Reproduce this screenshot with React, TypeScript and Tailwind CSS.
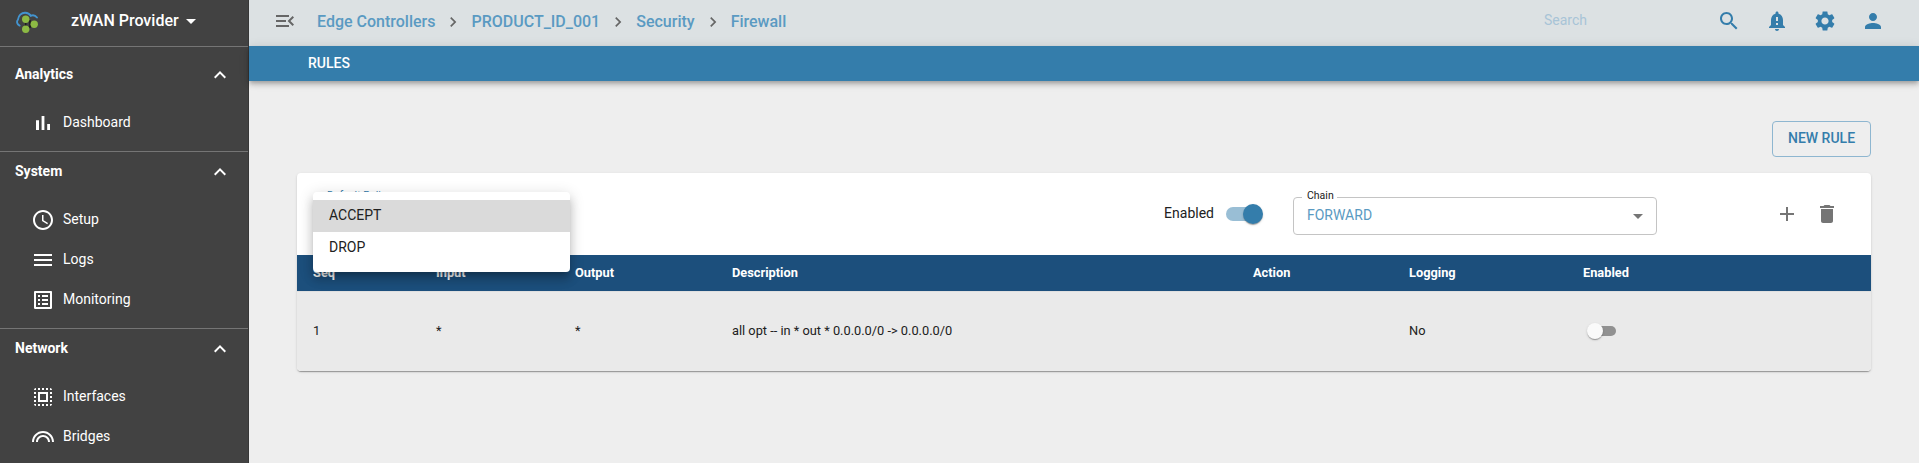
import React from "react";

type IconProps = { d: string; className?: string };

const Icon = ({ d, className = "size-6" }: IconProps) => (
  <svg viewBox="0 0 24 24" fill="currentColor" className={`shrink-0 ${className}`}>
    <path d={d} />
  </svg>
);

const P = {
  bars: "M5 9.2h3V19H5zM10.6 5h2.8v14h-2.8zm5.6 8H19v6h-2.8z",
  clock:
    "M11.99 2C6.47 2 2 6.48 2 12s4.47 10 9.99 10C17.52 22 22 17.52 22 12S17.52 2 11.99 2zM12 20c-4.42 0-8-3.58-8-8s3.58-8 8-8 8 3.58 8 8-3.58 8-8 8zm.5-13H11v6l5.25 3.15.75-1.23-4.5-2.67z",
  menu: "M3 18h18v-2H3v2zm0-5h18v-2H3v2zm0-7v2h18V6H3z",
  list: "M19 5v14H5V5h14m1.1-2H3.9c-.5 0-.9.4-.9.9v16.2c0 .4.4.9.9.9h16.2c.4 0 .9-.5.9-.9V3.9c0-.5-.5-.9-.9-.9zM11 7h6v2h-6V7zm0 4h6v2h-6v-2zm0 4h6v2h-6zM7 7h2v2H7zm0 4h2v2H7zm0 4h2v2H7z",
  select:
    "M3 5h2V3c-1.1 0-2 .9-2 2zm0 8h2v-2H3v2zm4 8h2v-2H7v2zM3 9h2V7H3v2zm10-6h-2v2h2V3zm6 0v2h2c0-1.1-.9-2-2-2zM5 21v-2H3c0 1.1.9 2 2 2zm-2-4h2v-2H3v2zM9 3H7v2h2V3zm2 18h2v-2h-2v2zm8-8h2v-2h-2v2zm0 8c1.1 0 2-.9 2-2h-2v2zm0-12h2V7h-2v2zm0 8h2v-2h-2v2zm-4 4h2v-2h-2v2zm0-16h2V3h-2v2zM7 17h10V7H7v10zm2-8h6v6H9V9z",
  arcs: "M12 10c-3.86 0-7 3.14-7 7h2c0-2.76 2.24-5 5-5s5 2.24 5 5h2c0-3.86-3.14-7-7-7zm0-4C5.93 6 1 10.93 1 17h2c0-4.96 4.04-9 9-9s9 4.04 9 9h2c0-6.07-4.93-11-11-11z",
  up: "M12 8l-6 6 1.41 1.41L12 10.83l4.59 4.58L18 14z",
  next: "M10 6L8.59 7.41 13.17 12l-4.58 4.59L10 18l6-6z",
  drop: "M7 10l5 5 5-5z",
  menuOpen:
    "M3 18h13v-2H3v2zm0-5h10v-2H3v2zm0-7v2h13V6H3zm18 9.59L17.42 12 21 8.41 19.59 7l-5 5 5 5L21 15.59z",
  search:
    "M15.5 14h-.79l-.28-.27C15.41 12.59 16 11.11 16 9.5 16 5.91 13.09 3 9.5 3S3 5.91 3 9.5 5.91 16 9.5 16c1.61 0 3.09-.59 4.23-1.57l.27.28v.79l5 4.99L20.49 19l-4.99-5zm-6 0C7.01 14 5 11.99 5 9.5S7.01 5 9.5 5 14 7.01 14 9.5 11.99 14 9.5 14z",
  bell: "M18 16v-5c0-3.07-1.64-5.64-4.5-6.32V4c0-.83-.67-1.5-1.5-1.5s-1.5.67-1.5 1.5v.68C7.63 5.36 6 7.92 6 11v5l-2 2v1h16v-1l-2-2zm-5 0h-2v-2h2v2zm0-4h-2V8h2v4zm-1 10c1.1 0 2-.9 2-2h-4c0 1.1.89 2 2 2z",
  gear: "M19.14 12.94c.04-.3.06-.61.06-.94 0-.32-.02-.64-.07-.94l2.03-1.58c.18-.14.23-.41.12-.61l-1.92-3.32c-.12-.22-.37-.29-.59-.22l-2.39.96c-.5-.38-1.03-.7-1.62-.94l-.36-2.54c-.04-.24-.24-.41-.48-.41h-3.84c-.24 0-.43.17-.47.41l-.36 2.54c-.59.24-1.13.57-1.62.94l-2.39-.96c-.22-.08-.47 0-.59.22L2.74 8.87c-.12.21-.08.47.12.61l2.03 1.58c-.05.3-.09.63-.09.94s.02.64.07.94l-2.03 1.58c-.18.14-.23.41-.12.61l1.92 3.32c.12.22.37.29.59.22l2.39-.96c.5.38 1.03.7 1.62.94l.36 2.54c.05.24.24.41.48.41h3.84c.24 0 .44-.17.47-.41l.36-2.54c.59-.24 1.13-.56 1.62-.94l2.39.96c.22.08.47 0 .59-.22l1.92-3.32c.12-.22.07-.47-.12-.61l-2.01-1.58zM12 15.6c-1.98 0-3.6-1.62-3.6-3.6s1.62-3.6 3.6-3.6 3.6 1.62 3.6 3.6-1.62 3.6-3.6 3.6z",
  person:
    "M12 12c2.21 0 4-1.79 4-4s-1.79-4-4-4-4 1.79-4 4 1.79 4 4 4zm0 2c-2.67 0-8 1.34-8 4v2h16v-2c0-2.66-5.33-4-8-4z",
  plus: "M19 13h-6v6h-2v-6H5v-2h6V5h2v6h6v2z",
  trash: "M6 19c0 1.1.9 2 2 2h8c1.1 0 2-.9 2-2V7H6v12zM19 4h-3.5l-1-1h-5l-1 1H5v2h14V4z",
};

const sections = [
  { title: "Analytics", items: [{ label: "Dashboard", d: P.bars }] },
  {
    title: "System",
    items: [
      { label: "Setup", d: P.clock },
      { label: "Logs", d: P.menu },
      { label: "Monitoring", d: P.list },
    ],
  },
  {
    title: "Network",
    items: [
      { label: "Interfaces", d: P.select },
      { label: "Bridges", d: P.arcs },
    ],
  },
];

const Logo = () => (
  <svg viewBox="0 0 24 24" className="size-6 shrink-0">
    <path
      d="M4.600 14.600C1.800 13.200 1.300 10.600 3 8.500 3.300 4.500 6.500 1.800 10 1.700c2.800-.1 4.600 1.200 5.700 3.100 2.300-.9 4.800-.2 6.300 1.700"
      fill="none"
      stroke="#4394cf"
      strokeWidth="1.900"
      strokeLinecap="round"
    />
    <path d="M10.700 8.500v9.500M10.700 8.500l8.500 4.800-8.500 4.700M15 9v8" fill="none" stroke="#1c1c1c" strokeWidth="1.500" />
    <circle cx="10.700" cy="8.300" r="3.700" fill="#8cb944" />
    <circle cx="19.200" cy="13.300" r="3.700" fill="#8cb944" />
    <circle cx="10.700" cy="18.200" r="3.700" fill="#8cb944" />
  </svg>
);

const Sidebar = () => (
  <aside className="flex h-full w-[249px] shrink-0 flex-col overflow-hidden border-r border-[#373737] bg-[#424242] text-white">
    <div className="flex h-[46px] shrink-0 items-center pl-[15px]">
      <Logo />
      <span className="ml-8 pb-[5px] text-[16px] leading-5 font-medium">zWAN Provider</span>
      <Icon d={P.drop} className="mb-1 size-6" />
    </div>
    {sections.map((s, i) => (
      <section
        key={s.title}
        className={`flex shrink-0 flex-col border-t border-[#757575] pb-2 ${i === 0 ? "pt-2" : ""}`}
      >
        <div className="flex h-10 items-center justify-between pr-4 pl-[15px]">
          <span className="pb-0.5 text-[14px] leading-5 font-bold">{s.title}</span>
          <Icon d={P.up} />
        </div>
        <div className="flex flex-col pt-2">
          {s.items.map((it) => (
            <div key={it.label} className="flex h-10 items-center gap-2 pl-[31px]">
              <Icon d={it.d} />
              <span className="pb-0.5 text-[14px] leading-5">{it.label}</span>
            </div>
          ))}
        </div>
      </section>
    ))}
  </aside>
);

const TopBar = () => (
  <header className="flex h-[46px] shrink-0 items-center bg-[#dce1e3] pr-[34px] pl-6">
    <Icon d={P.menuOpen} className="mb-1 size-6 text-[#666]" />
    <nav className="ml-5 flex flex-1 items-center pb-[3px] text-[16px] leading-6 font-medium text-[#5a9ac2]">
      {["Edge Controllers", "PRODUCT_ID_001", "Security", "Firewall"].map((c, i) => (
        <React.Fragment key={c}>
          {i > 0 && <Icon d={P.next} className="mx-2 size-5 text-[#666]" />}
          <span>{c}</span>
        </React.Fragment>
      ))}
    </nav>
    <span className="mr-[130px] pb-1.5 text-[14px] leading-5 text-[#a8c4d7]">Search</span>
    <div className="flex gap-6 pb-1 text-[#347dab]">
      <Icon d={P.search} />
      <Icon d={P.bell} />
      <Icon d={P.gear} />
      <Icon d={P.person} />
    </div>
  </header>
);

const columns = [
  { head: "Seq", cell: "1" },
  { head: "Input", cell: "*" },
  { head: "Output", cell: "*" },
  { head: "Description", cell: "all opt -- in * out * 0.0.0.0/0 -> 0.0.0.0/0" },
  { head: "Action", cell: "" },
  { head: "Logging", cell: "No" },
];

const grid = "grid grid-cols-[123px_139px_157px_521px_156px_174px_1fr] items-center pl-4";

const PolicySelect = () => (
  <div className="relative h-[38px] w-[257px] rounded border border-[#c4c4c4]">
    <span className="absolute -top-[10px] left-2 bg-white px-[5px] text-[10.5px] leading-4 text-[#347dab]">
      Default Policy
    </span>
    <div className="absolute -top-[6px] -left-px z-10 h-20 w-[257px] rounded bg-white py-2 text-[14px] text-[#212121] shadow-[0_5px_5px_-3px_rgba(0,0,0,0.2),0_8px_10px_1px_rgba(0,0,0,0.14),0_3px_14px_2px_rgba(0,0,0,0.12)]">
      <div className="h-8 bg-[#dadada] px-4 leading-[30px]">ACCEPT</div>
      <div className="h-8 px-4 leading-[30px]">DROP</div>
    </div>
  </div>
);

const ChainSelect = () => (
  <div className="relative flex h-[38px] w-[364px] items-center justify-between rounded border border-[#c4c4c4] pr-[6px] pl-[13px]">
    <span className="absolute -top-[10px] left-2 bg-white pr-[3px] pl-[5px] text-[10.5px] leading-4 text-[#212121]">
      Chain
    </span>
    <span className="pb-0.5 text-[14px] leading-5 text-[#5a9ac2]">FORWARD</span>
    <Icon d={P.drop} className="size-6 text-[#757575]" />
  </div>
);

const shadowKnob =
  "shadow-[0_2px_1px_-1px_rgba(0,0,0,0.2),0_1px_1px_0_rgba(0,0,0,0.14),0_1px_3px_0_rgba(0,0,0,0.12)]";

const RulesCard = () => (
  <div className="mt-4 flex flex-col rounded bg-white shadow-[0_2px_1px_-1px_rgba(0,0,0,0.2),0_1px_1px_0_rgba(0,0,0,0.14),0_1px_3px_0_rgba(0,0,0,0.12)]">
    <div className="flex h-[82px] items-start pt-6 pr-8 pl-4">
      <PolicySelect />
      <div className="mt-[6px] ml-auto flex items-center gap-[11px]">
        <span className="pb-0.5 text-[14px] leading-5 text-[#212121]">Enabled</span>
        <div className="relative flex h-[22px] w-[38px] items-center justify-end">
          <div className="absolute top-1 left-px h-[14px] w-[34px] rounded-full bg-[#99bed5]" />
          <div className={`relative size-5 rounded-full bg-[#347dab] ${shadowKnob}`} />
        </div>
      </div>
      <div className="ml-[30px]">
        <ChainSelect />
      </div>
      <div className="mt-[5px] ml-[118px] flex gap-4 text-[#757575]">
        <Icon d={P.plus} />
        <Icon d={P.trash} />
      </div>
    </div>
    <div className={`${grid} h-9 bg-[#1c4f7c] text-[12.8px] font-bold text-white`}>
      {columns.map((c) => (
        <span key={c.head} className="pb-px">{c.head}</span>
      ))}
      <span className="pb-px">Enabled</span>
    </div>
    <div className={`${grid} h-20 rounded-b border-t border-[#e0e0e0] bg-[#eaeaea] text-[12.8px] text-[#212121]`}>
      {columns.map((c) => (
        <span key={c.head} className="pb-px">{c.cell}</span>
      ))}
      <div className="relative mb-px ml-1 flex h-4 w-[29px] items-center">
        <div className="absolute top-[3px] right-0 h-[10px] w-[26px] rounded-full bg-[#919191]" />
        <div className={`relative size-4 rounded-full bg-[#fafafa] ${shadowKnob}`} />
      </div>
    </div>
  </div>
);

export default function App() {
  return (
    <div className="flex h-[463px] w-full overflow-hidden bg-[#eee] font-['Roboto',sans-serif]">
      <Sidebar />
      <div className="flex min-w-0 flex-1 flex-col">
        <TopBar />
        <div className="flex h-[35px] shrink-0 items-center bg-[#347dab] pb-px pl-[56px] text-[14px] font-medium text-white shadow-[0_2px_4px_-1px_rgba(0,0,0,0.2),0_4px_5px_0_rgba(0,0,0,0.14),0_1px_10px_0_rgba(0,0,0,0.12)]">
          <span className="pl-[3px]">RULES</span>
        </div>
        <main className="flex flex-col px-12 pt-10">
          <button className="flex h-9 w-[99px] items-center justify-center self-end rounded border border-[#8eb6d0] pb-0.5 text-[14px] font-medium text-[#347dab]">
            NEW RULE
          </button>
          <RulesCard />
        </main>
      </div>
    </div>
  );
}
